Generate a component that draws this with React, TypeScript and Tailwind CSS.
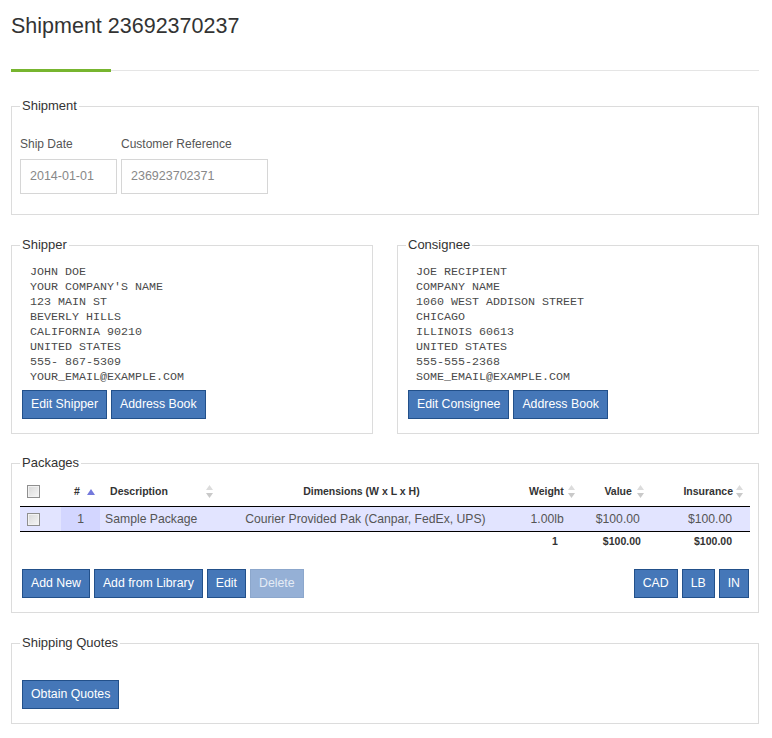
import React from "react";

// Shipment detail page: fieldsets for the shipment, addresses, packages and quotes

const shipper = [
	"JOHN DOE",
	"YOUR COMPANY'S NAME",
	"123 MAIN ST",
	"BEVERLY HILLS",
	"CALIFORNIA 90210",
	"UNITED STATES",
	"555- 867-5309",
	"YOUR_EMAIL@EXAMPLE.COM",
];

const consignee = [
	"JOE RECIPIENT",
	"COMPANY NAME",
	"1060 WEST ADDISON STREET",
	"CHICAGO",
	"ILLINOIS 60613",
	"UNITED STATES",
	"555-555-2368",
	"SOME_EMAIL@EXAMPLE.COM",
];

const Panel: React.FC<{ title: string; className?: string; children: React.ReactNode }> = ({
	title,
	className,
	children,
}) => (
	<fieldset className={`min-w-0 border border-[#dcdcdc] px-[8px] ${className ?? ""}`}>
		<legend className="px-[2px] text-[13px] leading-[18px] text-[#333]">{title}</legend>
		{children}
	</fieldset>
);

const Btn: React.FC<{ children: React.ReactNode; disabled?: boolean }> = ({ children, disabled }) => (
	<button
		disabled={disabled}
		className={
			disabled
				? "h-[29px] border border-[#8ca7cc] bg-[#95b0d6] px-[8px] text-[12.3px] text-[#e4ebf5]"
				: "h-[29px] border border-[#22508a] bg-[#4577b8] px-[8px] text-[12.3px] text-white"
		}>
		{children}
	</button>
);

const SortBoth = () => (
	<svg width="7" height="14" viewBox="0 0 7 14" className="shrink-0">
		<path d="M3.5 0 L7 5 H0 Z" fill="#dcdcdc" />
		<path d="M0 8 H7 L3.5 13 Z" fill="#c9c9c9" />
	</svg>
);

const SortAsc = () => (
	<svg width="8" height="6" viewBox="0 0 8 6" className="shrink-0">
		<path d="M4 0 L8 6 H0 Z" fill="#7479dc" />
	</svg>
);

const Check = () => (
	<span className="block h-[13px] w-[13px] border border-[#8f8f8f] bg-linear-to-br from-[#d8d8d8] to-[#f6f6f6] shadow-[inset_0_0_0_1px_#f2f2f2]" />
);

const Address: React.FC<{ lines: string[] }> = ({ lines }) => (
	<div className="pl-[10px] pt-[11px] font-['Liberation_Mono','Courier_New',monospace] text-[11.67px] leading-[15px] text-[#4a4a4a]">
		{lines.map((l) => (
			<div key={l} className="whitespace-pre">
				{l}
			</div>
		))}
	</div>
);

export default function App() {
	return (
		<div className="min-h-[738px] bg-white px-[11px] pb-[14px] font-['Liberation_Sans',Arial,sans-serif] text-[#333]">
			<h1 className="pt-[11px] text-[21.5px] leading-[30px] font-normal">Shipment 23692370237</h1>
			<div className="mt-[28px] flex w-[748px] items-center">
				<div className="h-[3px] w-[100px] bg-[#77b52f]" />
				<div className="h-px flex-1 bg-[#e5e5e5]" />
			</div>

			<div className="w-[748px]">
				<Panel title="Shipment" className="mt-[25px] pb-[20px] pt-[21px]">
					<div className="flex gap-[4px] text-[12px] text-[#555]">
						<div>
							<div className="leading-[17px]">Ship Date</div>
							<div className="mt-[6px] flex h-[35px] w-[97px] items-center border border-[#d6d6d6] pl-[9px] text-[12.5px] text-[#888]">
								2014-01-01
							</div>
						</div>
						<div>
							<div className="leading-[17px]">Customer Reference</div>
							<div className="mt-[6px] flex h-[35px] w-[147px] items-center border border-[#d6d6d6] pl-[9px] text-[12.5px] text-[#888]">
								236923702371
							</div>
						</div>
					</div>
				</Panel>

				<div className="mt-[21px] grid grid-cols-2 gap-[24px]">
					<Panel title="Shipper" className="pb-[14px]">
						<Address lines={shipper} />
						<div className="ml-[2px] mt-[5px] flex gap-[4px]">
							<Btn>Edit Shipper</Btn>
							<Btn>Address Book</Btn>
						</div>
					</Panel>
					<Panel title="Consignee" className="pb-[14px]">
						<Address lines={consignee} />
						<div className="ml-[2px] mt-[5px] flex gap-[4px]">
							<Btn>Edit Consignee</Btn>
							<Btn>Address Book</Btn>
						</div>
					</Panel>
				</div>

				<Panel title="Packages" className="mt-[20px] pb-[14px] pt-[5px]">
					<table className="w-full table-fixed border-separate border-spacing-0 text-[#333]">
						<colgroup>
							<col className="w-[41px]" />
							<col className="w-[39px]" />
							<col className="w-[120px]" />
							<col className="w-[290px]" />
							<col className="w-[71px]" />
							<col className="w-[69px]" />
							<col className="w-[99px]" />
						</colgroup>
						<thead>
							<tr className="text-[10.5px] font-bold">
								<th className="h-[30px] border-b border-black pl-[7px]">
									<Check />
								</th>
								<th className="h-[30px] border-b border-black">
									<div className="flex items-center pl-[13px] gap-[7px]">
										<span>#</span>
										<SortAsc />
									</div>
								</th>
								<th className="h-[30px] border-b border-black">
									<div className="flex items-center justify-between pl-[10px] pr-[7px]">
										<span>Description</span>
										<SortBoth />
									</div>
								</th>
								<th className="h-[30px] border-b border-black pl-[10px] pr-[18px] text-center">
									Dimensions (W x L x H)
								</th>
								<th className="h-[30px] border-b border-black">
									<div className="flex items-center justify-end gap-[4px] pr-[7px]">
										<span>Weight</span>
										<SortBoth />
									</div>
								</th>
								<th className="h-[30px] border-b border-black">
									<div className="flex items-center justify-end gap-[5px] pr-[7px]">
										<span>Value</span>
										<SortBoth />
									</div>
								</th>
								<th className="h-[30px] border-b border-black">
									<div className="flex items-center justify-end gap-[3px] pr-[7px]">
										<span>Insurance</span>
										<SortBoth />
									</div>
								</th>
							</tr>
						</thead>
						<tbody>
							<tr className="bg-[#e2e4ff] text-[12.2px] text-[#555]">
								<td className="h-[25px] border-b border-black pl-[7px]">
									<Check />
								</td>
								<td className="h-[25px] border-b border-black bg-[#d3d6ff] text-center">1</td>
								<td className="h-[25px] border-b border-black pl-[5px] whitespace-nowrap">Sample Package</td>
								<td className="h-[25px] border-b border-black px-[5px] text-center whitespace-nowrap">
									Courier Provided Pak (Canpar, FedEx, UPS)
								</td>
								<td className="h-[25px] border-b border-black pr-[18px] text-right">1.00lb</td>
								<td className="h-[25px] border-b border-black pr-[11px] text-right">$100.00</td>
								<td className="h-[25px] border-b border-black pr-[18px] text-right">$100.00</td>
							</tr>
						</tbody>
						<tfoot>
							<tr className="text-[10.5px] font-bold">
								<td className="h-[20px]" />
								<td />
								<td />
								<td />
								<td className="pr-[24px] text-right">1</td>
								<td className="pr-[10px] text-right">$100.00</td>
								<td className="pr-[18px] text-right">$100.00</td>
							</tr>
						</tfoot>
					</table>
					<div className="mt-[17px] flex justify-between pl-[2px] pr-[1px]">
						<div className="flex gap-[4px]">
							<Btn>Add New</Btn>
							<Btn>Add from Library</Btn>
							<Btn>Edit</Btn>
							<Btn disabled>Delete</Btn>
						</div>
						<div className="flex gap-[4px]">
							<Btn>CAD</Btn>
							<Btn>LB</Btn>
							<Btn>IN</Btn>
						</div>
					</div>
				</Panel>

				<Panel title="Shipping Quotes" className="mt-[21px] pb-[14px] pt-[28px]">
					<div className="ml-[2px]">
						<Btn>Obtain Quotes</Btn>
					</div>
				</Panel>
			</div>
		</div>
	);
}
